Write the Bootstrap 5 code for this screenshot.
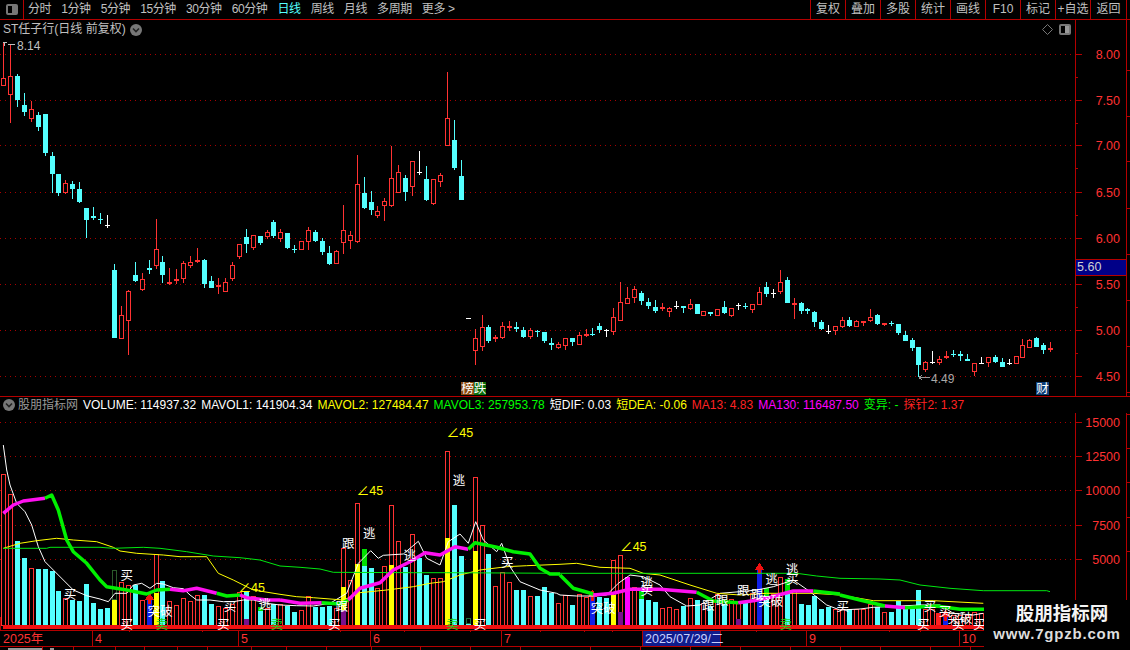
<!DOCTYPE html>
<html lang="zh">
<head>
<meta charset="utf-8">
<title>ST任子行</title>
<link rel="stylesheet" href="https://cdn.jsdelivr.net/npm/bootstrap@5.3.0/dist/css/bootstrap.min.css">
<style>
html,body{background:#000;margin:0;height:650px;overflow:hidden}
body,.chart-font{font-family:"Liberation Sans","Noto Sans CJK SC",sans-serif;color:#c0c0c0}
.stage{width:1130px;height:650px;position:relative;background:#000}
.topbar{height:20px;border-bottom:1px solid #b40000;font-size:12px;line-height:18px}
.toggle-box{width:24px;border-right:1px solid #b40000}
.toggle-ico{width:12px;height:11px;border:2px solid #777;border-radius:2px;background:linear-gradient(90deg,#000 50%,#777 50%)}
.toggle-ico.flip{background:linear-gradient(90deg,#000 50%,#999 50%)}
.period-nav{gap:10px;margin-left:4px;letter-spacing:-.4px}
.period-on{color:#54ffff}
.tool-nav{margin-right:3px}
.tool-btn{width:35px;border-left:1px solid #b40000;text-align:center;white-space:nowrap}
.tool-btn:last-child{border-right:1px solid #b40000;width:37px}
.price-pane{height:376px}
.title-row{position:absolute;left:3px;top:1px;font-size:12px;line-height:17px;gap:4px}
.chev{width:12px;height:12px;border-radius:50%;background:#777}
.pane-tools{position:absolute;left:1042px;top:4px;gap:6px}
.legend-row{height:17px;font-size:12px;line-height:17px;white-space:nowrap;padding-left:3px;border-top:1px solid #b40000}
.legend-name{color:#999;font-size:12px;margin:0 5px 0 3px}
.legend-item{margin-right:5px}
.c-w{color:#fff}.c-y{color:#ff0}.c-g{color:#0f0}.c-r{color:#f22}.c-m{color:#f0f}
svg{display:block}
.vol-pane{height:217px}
.vol-pane svg{overflow:visible;position:relative;z-index:1}
.axis-pane{height:20px}
.stamp{position:absolute;left:984px;top:600px;width:146px;height:50px;background:#000;text-align:center;z-index:2}
.stamp-cn{color:#f4f4f4;font-weight:700;font-size:18.5px;line-height:24px;padding-left:10px;font-family:"Noto Sans CJK SC",sans-serif}
.stamp-url{color:#ddd;font-weight:700;font-size:15px;line-height:20px;letter-spacing:.8px;padding-left:0}
</style>
</head>
<body>
<div class="stage">
  <div class="topbar d-flex align-items-stretch">
    <div class="toggle-box d-flex align-items-center justify-content-center"><span class="toggle-ico"></span></div>
    <nav class="period-nav d-flex flex-grow-1">
      <span>分时</span><span>1分钟</span><span>5分钟</span><span>15分钟</span><span>30分钟</span><span>60分钟</span><span class="period-on">日线</span><span>周线</span><span>月线</span><span>多周期</span><span>更多 &gt;</span>
    </nav>
    <nav class="tool-nav d-flex">
      <span class="tool-btn">复权</span><span class="tool-btn">叠加</span><span class="tool-btn">多股</span><span class="tool-btn">统计</span><span class="tool-btn">画线</span><span class="tool-btn">F10</span><span class="tool-btn">标记</span><span class="tool-btn">+自选</span><span class="tool-btn">返回</span>
    </nav>
  </div>

  <div class="price-pane position-relative">
    <svg id="priceSvg" class="chart-font" width="1130" height="376" viewBox="0 20 1130 376" shape-rendering="crispEdges"></svg>
    <div class="title-row d-flex align-items-center">
      <span>ST任子行(日线 前复权)</span>
      <svg class="chev" viewBox="0 0 12 12"><path d="M3 4.5 6 7.5 9 4.5" fill="none" stroke="#222" stroke-width="1.6"/></svg>
    </div>
    <div class="pane-tools d-flex align-items-center">
      <svg width="11" height="11" viewBox="0 0 11 11"><path d="M5.5.5 10.5 5.5 5.5 10.5.5 5.5Z" fill="none" stroke="#777"/></svg>
      <span class="toggle-ico flip"></span>
    </div>
  </div>

  <div class="legend-row d-flex align-items-center">
    <svg class="chev flex-shrink-0" viewBox="0 0 12 12"><path d="M3 4.5 6 7.5 9 4.5" fill="none" stroke="#222" stroke-width="1.6"/></svg>
    <span class="legend-name">股朋指标网</span>
    <span class="legend-item c-w">VOLUME: 114937.32</span>
    <span class="legend-item c-w">MAVOL1: 141904.34</span>
    <span class="legend-item c-y">MAVOL2: 127484.47</span>
    <span class="legend-item c-g">MAVOL3: 257953.78</span>
    <span class="legend-item c-w">短DIF: 0.03</span>
    <span class="legend-item c-y">短DEA: -0.06</span>
    <span class="legend-item c-r">MA13: 4.83</span>
    <span class="legend-item c-m">MA130: 116487.50</span>
    <span class="legend-item c-g">变异: -</span>
    <span class="legend-item c-r">探针2: 1.37</span>
  </div>

  <div class="vol-pane"><svg id="volSvg" class="chart-font" width="1130" height="217" viewBox="0 413 1130 217" shape-rendering="crispEdges"></svg></div>
  <div class="axis-pane"><svg id="dateSvg" class="chart-font" width="1130" height="20" viewBox="0 630 1130 20" shape-rendering="crispEdges"></svg></div>

  <div class="stamp">
    <div class="stamp-cn">股朋指标网</div>
    <div class="stamp-url">www.7gpzb.com</div>
  </div>
</div>

<script src="https://cdn.jsdelivr.net/npm/bootstrap@5.3.0/dist/js/bootstrap.bundle.min.js"></script>
<script>
const RED='#ff3232',CY='#54ffff',WH='#ffffff',AX='#b40000',GRID='#a80000';
/* candle: [zoomX, high, top, bottom, low, kind] zoom coords are 3x crops */
const candleSets=[
 [0,0,[[11,128,235,257,258,'r'],[31,135,229,284,369,'r'],[52,222,228,300,320,'c'],[73,280,315,335,348,'c'],[94,303,328,358,365,'r'],[115,336,345,381,393,'c'],[136,342,342,459,468,'c']]],
 [0,130,[[157,66,78,132,189,'c'],[175,132,132,189,197,'c'],[196,150,160,189,192,'r'],[217,153,162,177,207,'c'],[238,156,177,216,219,'c'],[259,234,234,270,324,'c'],[280,231,258,267,270,'c'],[301,249,266,269,282,'c'],[322,255,285,288,294,'w'],[343,402,420,624,624,'c'],[364,528,555,627,627,'r'],[385,480,483,573,675,'r'],[406,396,435,453,456,'c'],[427,429,447,480,483,'r'],[448,390,414,420,432,'c'],[469,267,357,408,417,'r'],[487,378,396,435,459,'c'],[508,414,456,465,465,'r'],[529,417,447,456,462,'r'],[550,393,399,447,459,'r'],[571,378,396,408,414,'r'],[592,354,390,399,399,'r'],[613,387,390,462,474,'c'],[634,438,453,474,474,'c'],[655,444,465,473,492,'r'],[676,444,456,486,486,'r'],[697,396,405,447,453,'r'],[718,342,342,381,387,'r'],[739,297,321,342,369,'c'],[760,315,315,354,360,'r'],[781,318,318,339,345,'c'],[802,300,306,321,327,'r'],[820,270,276,318,324,'c']]],
 [280,130,[[1,298,306,327,336,'r'],[22,309,309,354,357,'c'],[43,345,357,360,369,'c'],[64,333,333,360,360,'r'],[85,291,300,336,360,'r'],[106,300,306,333,336,'c'],[127,324,333,366,375,'c'],[148,348,369,402,405,'c'],[169,360,363,402,402,'r'],[190,225,300,339,372,'r'],[211,303,315,333,357,'r'],[232,75,162,336,339,'r'],[253,141,189,234,237,'c'],[274,183,216,240,255,'c'],[292,228,243,258,264,'r'],[313,204,213,228,273,'r'],[334,48,144,228,231,'r'],[355,105,126,189,189,'r'],[376,135,144,186,213,'c'],[397,93,93,171,198,'r'],[418,63,126,129,135,'w'],[439,108,147,210,213,'c'],[460,147,147,222,225,'r'],[481,129,135,156,171,'r'],[502,-174,-36,48,48,'r'],[523,-30,30,114,120,'c'],[544,90,138,210,210,'c'],[564,565,564,566,566,'w'],
  [586,597,624,663,705,'r'],[607,555,591,651,663,'r'],[625,585,591,633,639,'c'],[646,615,621,627,636,'r'],[667,576,588,624,627,'r'],[688,573,588,594,603,'r'],[709,576,591,597,606,'c'],[730,591,600,621,624,'c'],[751,594,600,621,627,'r'],[772,600,604,606,621,'c'],[793,606,606,633,639,'c'],[814,624,639,648,660,'c'],[835,636,642,654,657,'r']]],
 [560,250,[[16,264,264,288,300,'r'],[37,264,264,276,288,'c'],[58,246,255,285,285,'r'],[79,237,252,261,261,'r'],[97,234,252,255,258,'c'],[118,219,228,240,249,'c'],[139,237,240,243,261,'w'],[160,174,201,246,255,'r'],[181,96,156,213,213,'r'],[202,111,144,162,162,'r'],[223,108,117,144,159,'r'],[244,123,129,153,165,'c'],[265,144,156,168,177,'c'],[286,150,171,183,189,'c'],[307,159,171,180,183,'r'],[328,171,174,186,201,'r'],[349,153,168,171,177,'w'],[370,168,168,174,189,'c'],[391,147,162,177,180,'r'],[412,162,162,192,192,'c'],[430,183,183,198,198,'r'],[451,186,186,192,198,'c'],[472,177,177,198,198,'r'],[493,153,171,189,192,'c'],[514,174,174,198,201,'r'],[535,159,165,168,180,'w'],[556,159,168,171,177,'c'],[577,162,162,180,189,'r'],[598,111,126,165,165,'r'],[619,96,111,132,141,'c'],[640,117,129,132,144,'w'],[661,60,96,126,132,'r'],[682,81,90,159,159,'c'],[703,144,159,165,207,'r'],[724,156,159,183,192,'c'],[742,174,177,186,192,'c'],[763,183,186,216,231,'c'],[784,210,216,237,240,'c'],[805,225,243,246,252,'w'],[826,228,228,243,255,'r']]],
 [840,250,[[7,201,210,231,234,'r'],[28,201,210,228,231,'c'],[49,210,213,231,231,'r'],[70,213,213,219,228,'r'],[91,177,201,213,216,'r'],[112,192,195,222,225,'c'],[133,219,219,225,228,'r'],[154,213,219,222,228,'c'],[175,222,222,249,255,'c'],[196,243,255,273,273,'c'],[217,264,270,294,303,'c'],[235,291,291,345,381,'c'],[256,333,336,360,366,'r'],[277,303,336,339,342,'w'],[298,318,327,339,345,'r'],[319,303,318,327,327,'r'],[340,300,312,315,321,'c'],[361,303,312,321,333,'c'],[382,312,327,333,333,'c'],[403,339,339,366,378,'r'],[424,321,339,342,342,'w'],[445,321,321,339,351,'r'],[466,315,321,336,339,'c'],[487,324,336,351,351,'c'],[508,327,339,342,345,'w'],[529,318,318,342,342,'r'],[547,267,285,324,324,'r'],[568,267,270,294,294,'r'],[589,261,264,291,291,'c'],[610,279,285,300,312,'c'],[631,276,294,303,306,'r']]]
];
const r=(x,y,w,h,f)=>`<rect x="${x}" y="${y}" width="${w}" height="${h}" fill="${f}"/>`;
const holl=(x,y,w,h,s)=>`<rect x="${x+.5}" y="${y+.5}" width="${w-1}" height="${h-1}" fill="#000" stroke="${s}"/>`;
const tx=(x,y,s,f,sz,a)=>`<text x="${x}" y="${y}" fill="${f}" font-size="${sz}" text-anchor="${a||'start'}" dominant-baseline="central" shape-rendering="auto">${s}</text>`;
let P='';
/* grid + axis */
const pGrid=[[53.5,'8.00'],[99.5,'7.50'],[145.3,'7.00'],[192.3,'6.50'],[238.3,'6.00'],[284.3,'5.50'],[330.3,'5.00'],[376.3,'4.50']];
pGrid.forEach(g=>{const y=Math.round(g[0]);
  P+=`<line x1="0" x2="1075" y1="${y+.5}" y2="${y+.5}" stroke="${GRID}" stroke-dasharray="1 4"/>`;
  P+=r(1075,y,7,1,AX)+r(1075,y+23,3,1,AX)+tx(1120,y+.5,g[1],RED,12.5,'end');
  P+=r(1126,y+16,4,1,AX);
});
P+=r(1075,20,1,376,AX)+r(1126,20,1,376,AX);
P+=r(1076,259,50,1,AX)+r(1076,275,50,1,AX)+r(1076,260,50,15,'#000088')+tx(1077,267,'5.60','#d0d0d0',12.5);
candleSets.forEach(s=>{const[x0,y0,list]=s;list.forEach(c=>{
  const cx=Math.floor(x0+c[0]/3),h=Math.round(y0+c[1]/3),t=Math.round(y0+c[2]/3),b=Math.round(y0+c[3]/3),l=Math.round(y0+c[4]/3),k=c[5];
  const col=k=='r'?RED:k=='c'?CY:WH;
  const bh=Math.max(b-t,1);
  if(h<l)P+=r(cx,h,1,l-h,col);
  if(bh<=3||k=='w')P+=r(cx-2,t,5,Math.min(bh,2),col);
  else if(k=='r')P+=holl(cx-2,t,5,bh,col);
  else P+=r(cx-2,t,5,bh,col);
});});
/* price marks */
P+=`<path d="M3 42.5H7M4 42V46M8 44.5H15" stroke="#c0c0c0" fill="none"/>`+tx(17,46,'8.14','#c0c0c0',12);
P+=`<path d="M919 377.5H930M919 377.5L922 375M919 377.5L922 380" stroke="#999" fill="none"/>`+tx(931,379,'4.49','#a8a8a8',12);
const tag=(x,w,ch,bg)=>r(x,382,w,13,bg)+tx(x+w/2,388.5,ch,'#fff',12.5,'middle');
P+=tag(461,13,'榜','#8a4a10')+tag(474,12,'跌','#0a6e0a')+tag(1036,13,'财','#0f3f78');
document.getElementById('priceSvg').innerHTML=P;

/* ---------- volume pane ---------- */
let V='';
const vGrid=[[422,'15000'],[456,'12500'],[490,'10000'],[525,'7500'],[559,'5000']];
vGrid.forEach(g=>{const y=g[0];
  V+=`<line x1="0" x2="1075" y1="${y+.5}" y2="${y+.5}" stroke="${GRID}" stroke-dasharray="1 4"/>`;
  V+=r(1075,y,7,1,AX)+tx(1120,y+.5,g[1],RED,12.5,'end')+r(1126,y-8,4,1,AX);
});
V+=r(1075,413,1,217,AX)+r(1126,413,1,217,AX);
/* [zoomX, top, kind] */
const bars=[
 [0,430,[[10,133,'r'],[31,192,'r'],[52,333,'c'],[73,384,'c'],[94,414,'r'],[115,417,'c'],[136,417,'c'],[157,423,'c'],[175,483,'c'],[196,504,'r'],[217,510,'c'],[238,513,'c'],[259,462,'c'],[280,519,'c'],[301,537,'c'],[322,534,'c'],[364,456,'r'],[385,465,'r'],[406,465,'c'],[427,510,'r'],[469,372,'r'],[487,453,'c'],[508,513,'r'],[529,525,'r'],[550,504,'r'],[571,513,'r'],[592,495,'r'],[613,495,'c'],[634,522,'c'],[655,528,'r'],[676,534,'r'],[697,522,'r'],[718,486,'r'],[739,484,'c'],[760,498,'r'],[781,540,'c'],[802,534,'r'],[820,522,'c']]],
 [280,430,[[1,522,'r'],[22,528,'c'],[43,546,'c'],[64,540,'r'],[85,498,'r'],[106,531,'c'],[127,531,'c'],[148,528,'c'],[169,534,'r'],[190,354,'r'],[211,450,'r'],[232,219,'r'],[253,408,'c'],[274,414,'c'],[292,474,'r'],[313,408,'r'],[334,225,'r'],[355,333,'r'],[376,411,'c'],[397,312,'r'],[418,384,'c'],[439,435,'c'],[460,444,'r'],[481,444,'r'],[502,63,'r'],[523,225,'c'],[544,378,'c'],[565,579,'c'],[586,141,'r'],[607,285,'r'],[625,372,'c'],[646,468,'r'],[667,426,'r'],[688,456,'r'],[709,480,'c'],[730,480,'c'],[751,498,'r'],[772,498,'c'],[793,471,'c'],[814,489,'c'],[835,519,'r']]],
 [560,530,[[16,195,'r'],[37,225,'c'],[58,192,'r'],[79,201,'r'],[118,201,'c'],[139,204,'c'],[160,90,'r'],[181,75,'r'],[223,171,'r'],[244,207,'c'],[265,210,'c'],[286,216,'c'],[307,234,'r'],[328,231,'r'],[349,237,'r'],[370,228,'c'],[391,204,'r'],[412,210,'c'],[430,219,'r'],[451,228,'c'],[472,192,'r'],[493,222,'c'],[514,207,'r'],[535,216,'r'],[556,219,'c'],[577,189,'r'],[619,198,'c'],[640,192,'r'],[661,141,'r'],[682,192,'c'],[703,180,'r'],[724,222,'c'],[745,225,'c'],[763,198,'c'],[784,237,'c'],[805,231,'c'],[826,237,'r']]],
 [840,530,[[7,237,'r'],[28,237,'c'],[49,237,'r'],[70,237,'r'],[91,222,'r'],[112,231,'c'],[133,246,'r'],[154,246,'c'],[175,213,'c'],[196,237,'c'],[217,237,'c'],[235,180,'c'],[256,237,'r'],[277,237,'r'],[340,255,'r'],[361,255,'r'],[382,255,'r'],[403,246,'r'],[424,250,'r']]]
];
bars.forEach(s=>{const[x0,y0,list]=s;list.forEach(b=>{
  const cx=Math.floor(x0+b[0]/3),t=Math.round(y0+b[1]/3);
  V+= b[2]=='c'?r(cx-2,t,5,625-t,CY):holl(cx-2,t,5,625-t+1,RED);
});});
/* [absX, top, bottom, colour] overlays */
const fills=[[114,599,625,'#ffff00'],[156,593,625,'#ffff00'],[246,619,625,'#7a0f8c'],[260,607,611,'#00e000'],
 [343,587,610,'#ffff00'],[343,610,625,'#7a0f8c'],[357,564,625,'#ffff00'],[364,549,566,'#00e000'],[391,565,625,'#ffff00'],[447,538,625,'#ffff00'],[475,551,625,'#ffff00'],
 [613,595,625,'#ffff00'],[620,612,625,'#7a0f8c'],[627,577,625,'#ff00ff'],[641,591,599,'#00e000'],[738,619,625,'#7a0f8c'],[766,588,596,'#00e000'],[787,579,594,'#00e000'],[938,613,625,'#ff2020']];
fills.forEach(f=>V+=r(f[0]-2,f[1],5,f[2]-f[1],f[3]));
/* dark hollow overlays */
V+=`<rect x="112.5" y="570.5" width="4" height="29" fill="none" stroke="#2a5a2a"/>`;
V+=`<rect x="466.5" y="618.5" width="4" height="5" fill="none" stroke="#1e6a3a"/>`;
/* blue signal bars with arrows */
[[149,600],[592,597],[759,570],[945,617]].forEach(b=>{
  const x=b[0],t=b[1];
  V+=r(x-2,t,5,625-t,'#1020e8');
  V+=`<path d="M${x-4.5} ${t}L${x+.5} ${t-7}L${x+5.5} ${t}Z" fill="#f01010"/>`+r(x-1,t,3,4,'#f01010');
});
/* MA lines, in zoom coords */
const pts=(x0,y0,a)=>a.map(p=>(x0+p[0]/3).toFixed(1)+','+(y0+p[1]/3).toFixed(1)).join(' ');
const poly=(x0,y0,a,c,w)=>`<polyline points="${pts(x0,y0,a)}" fill="none" stroke="${c}" stroke-width="${w}" stroke-linejoin="round" shape-rendering="auto"/>`;
const join=(...s)=>s.flatMap(([x0,y0,a])=>a.map(p=>[x0+p[0]/3,y0+p[1]/3]));
const line=(a,c,w)=>`<polyline points="${a.map(p=>p[0].toFixed(1)+','+p[1].toFixed(1)).join(' ')}" fill="none" stroke="${c}" stroke-width="${w}" stroke-linejoin="round" shape-rendering="auto"/>`;
V+=line(join([0,430,[[10,45],[20,120],[30,165],[50,220],[75,245],[95,285],[115,350],[135,395],[160,420],[190,450],[220,480],[260,497],[300,507],[325,515],[345,490],[380,490],[400,465],[425,460],[450,475],[470,460],[490,462],[520,473],[550,476],[570,495],[590,510],[630,510],[670,515],[700,515],[730,510],[760,510],[800,520],[840,525]]],
 [280,430,[[50,527],[100,528],[150,520],[200,490],[235,400],[250,385],[272,362],[295,385],[310,376],[370,372],[415,334],[440,385],[480,405],[505,335],[540,312],[565,340],[587,275],[610,330],[650,365],[665,340],[690,410],[720,455],[780,480],[830,490]]],
 [560,530,[[0,195],[50,198],[100,198],[140,195],[175,160],[210,135],[250,140],[300,165],[330,200],[380,228],[420,225],[480,190],[540,185],[590,180],[640,170],[700,150],[750,185],[800,225],[840,240]]],
 [840,530,[[60,237],[100,232],[180,228],[240,225],[300,225],[340,250],[400,255],[430,250]]]),'#fff',1);
V+=line(join([0,430,[[10,355],[60,340],[110,332],[170,325],[220,330],[290,335],[340,352],[360,363],[410,370],[490,375],[540,380],[620,380],[655,430],[700,450],[760,480],[840,493]]],
 [280,430,[[50,500],[100,503],[190,510],[240,488],[320,480],[400,470],[450,460],[490,455],[540,435],[600,420],[680,410],[740,407],[840,403]]],
 [560,530,[[50,100],[120,112],[210,115],[250,130],[300,135],[390,165],[470,190],[540,195],[620,190],[760,190],[840,195]]],
 [840,530,[[100,212],[280,212],[430,220]]]),'#ffff00',1);
V+=line(join([0,430,[[10,355],[140,355],[150,352],[300,352],[340,355],[430,352],[480,355],[560,365],[640,378],[720,383],[780,390],[840,408]]],
 [280,430,[[60,412],[120,417],[160,427],[400,428],[500,428],[840,430]]],
 [560,530,[[0,130],[710,130],[770,138],[840,145]]],
 [840,530,[[120,147],[180,150],[240,165],[330,175],[430,182],[620,182],[630,185]]]),'#00e810',1);
const M='#ff10f0',G='#00f000';
[[0,430,[[10,250],[40,225],[70,213],[135,205]],M],[0,430,[[135,205],[155,195],[175,240],[200,330],[220,365],[260,400],[300,450],[320,470],[380,480],[440,492],[470,480],[510,478]],G],[0,430,[[510,478],[550,482],[590,475],[650,490]],M],[0,430,[[650,490],[680,498],[720,495]],G],[0,430,[[720,495],[740,503],[800,510],[840,510]],M],
 [280,430,[[0,510],[60,520],[125,518]],M],[280,430,[[125,518],[180,522],[205,510]],G],[280,430,[[205,510],[240,475],[300,458],[340,420],[390,395],[435,368],[480,375],[525,350],[565,358]],M],[280,430,[[565,358],[585,338],[650,352],[700,365],[750,372],[780,415],[810,432],[840,432]],G],
 [560,530,[[0,135],[40,175],[100,192]],G],[560,530,[[100,195],[160,190],[210,178],[300,178],[410,187]],M],[560,530,[[410,187],[460,213],[535,218]],G],[560,530,[[535,218],[580,212],[620,205],[700,183],[760,183]],M],[560,530,[[760,183],[840,192]],G],
 [840,530,[[0,195],[60,210],[135,228]],G],[840,530,[[135,228],[195,233]],M],[840,530,[[195,233],[290,228],[360,238],[432,238]],G]
].forEach(s=>V+=poly(s[0],s[1],s[2],s[3],3.5));
/* base band */
V+=r(3,625,1072,4,'#f01010')+r(0,617,1,13,AX);
/* signal glyphs */
const sig=(x0,y0,a,c,sz)=>a.forEach(s=>V+=tx((x0+s[0]/3).toFixed(1),(y0+s[1]/3).toFixed(1),s[2],c,sz||12.5,'middle'));
sig(0,430,[[210,495,'买'],[380,438,'买'],[380,585,'买'],[690,530,'买'],[670,585,'买'],[480,546,'突破'],[795,525,'逃']],'#fff');
sig(0,430,[[485,585,'卖'],[830,585,'卖']],'#19d219');
sig(280,430,[[205,342,'跟'],[268,312,'逃'],[537,152,'逃'],[390,377,'逃'],[185,530,'跟'],[163,585,'买'],[600,585,'买'],[682,400,'买']],'#fff');
sig(280,430,[[517,585,'卖']],'#19d219');
sig(560,530,[[130,238,'突破'],[260,158,'逃'],[260,182,'买'],[445,227,'跟'],[487,212,'跟'],[550,182,'跟'],[592,195,'跟'],[632,215,'突破'],[635,150,'逃'],[697,120,'逃'],[697,150,'买']],'#fff');
sig(560,530,[[677,285,'卖']],'#19d219');
sig(840,530,[[8,232,'买'],[270,230,'买'],[250,285,'买'],[315,245,'买'],[355,285,'买'],[418,285,'买'],[360,268,'突破']],'#fff');
/* ∠45 marks */
[[0,430,755,473],[280,430,270,182],[280,430,540,8],[560,530,220,52]].forEach(a=>{
 V+=tx(a[0]+a[2]/3,a[1]+a[3]/3,'∠45','#ffff00',12.5,'middle');
});
document.getElementById('volSvg').innerHTML=V;

/* ---------- date axis ---------- */
let D=r(0,630,1130,1,AX)+r(0,646,1130,1,AX);
[[92,'4'],[238,'5'],[370,'6'],[501,'7'],[806,'9'],[959,'10']].forEach(d=>{
  D+=r(d[0],630,1,16,AX)+tx(d[0]+3,638.5,d[1],RED,12.5);
});
D+=tx(3,638.5,'2025年',RED,12.5);
[129,202,340,404,470,540,584,612,678,756,889,920].forEach(x=>D+=r(x,630,1,2,AX));
D+=r(642,630,79,16,AX)+r(643,631,77,15,'#101c8c')+tx(645,638.5,'2025/07/29/二','#c8d0ff',12.5);
[42,73,115,144,177,207,251,286,326,371,420,470,520,590,640,690,740,790,840,880,930,970].forEach(x=>D+=r(x,647,1,3,AX));
D+=r(8,648,34,2,'#999')+r(50,648,4,2,'#999');
document.getElementById('dateSvg').innerHTML=D;
</script>
</body>
</html>
